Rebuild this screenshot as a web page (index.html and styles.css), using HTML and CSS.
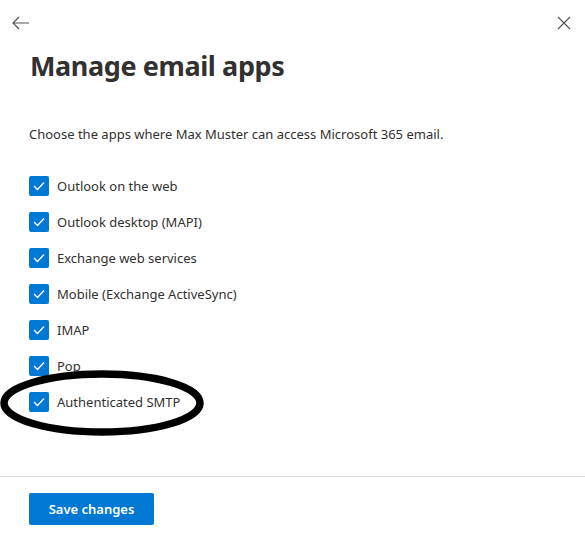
FILE: index.html
```html
<!DOCTYPE html>
<html>
<head>
<meta charset="utf-8">
<link rel="stylesheet" href="styles.css">
</head>
<body>
<div class="panel">
  <div class="topbar">
    <svg class="icon back" width="18" height="14" viewBox="0 0 18 14"><path d="M7 1 L1 7 L7 13 M1 7 H17" fill="none" stroke="#555" stroke-width="1.2"/></svg>
    <svg class="icon close" width="14" height="14" viewBox="0 0 14 14"><path d="M1 1 L13 13 M13 1 L1 13" fill="none" stroke="#555" stroke-width="1.2"/></svg>
  </div>
  <h1 class="title">Manage email apps</h1>
  <p class="desc">Choose the apps where Max Muster can access Microsoft 365 email.</p>
  <ul class="list">
    <li class="item"><span class="cb"><svg width="12" height="10" viewBox="0 0 12 10"><path d="M1 5 L4.5 8.5 L11 1.5" fill="none" stroke="#fff" stroke-width="1.3"/></svg></span>Outlook on the web</li>
    <li class="item"><span class="cb"><svg width="12" height="10" viewBox="0 0 12 10"><path d="M1 5 L4.5 8.5 L11 1.5" fill="none" stroke="#fff" stroke-width="1.3"/></svg></span>Outlook desktop (MAPI)</li>
    <li class="item"><span class="cb"><svg width="12" height="10" viewBox="0 0 12 10"><path d="M1 5 L4.5 8.5 L11 1.5" fill="none" stroke="#fff" stroke-width="1.3"/></svg></span>Exchange web services</li>
    <li class="item"><span class="cb"><svg width="12" height="10" viewBox="0 0 12 10"><path d="M1 5 L4.5 8.5 L11 1.5" fill="none" stroke="#fff" stroke-width="1.3"/></svg></span>Mobile (Exchange ActiveSync)</li>
    <li class="item"><span class="cb"><svg width="12" height="10" viewBox="0 0 12 10"><path d="M1 5 L4.5 8.5 L11 1.5" fill="none" stroke="#fff" stroke-width="1.3"/></svg></span>IMAP</li>
    <li class="item"><span class="cb"><svg width="12" height="10" viewBox="0 0 12 10"><path d="M1 5 L4.5 8.5 L11 1.5" fill="none" stroke="#fff" stroke-width="1.3"/></svg></span>Pop</li>
    <li class="item highlight"><span class="cb"><svg width="12" height="10" viewBox="0 0 12 10"><path d="M1 5 L4.5 8.5 L11 1.5" fill="none" stroke="#fff" stroke-width="1.3"/></svg></span>Authenticated SMTP
      <svg class="ring" width="210" height="72" viewBox="0 0 210 72"><ellipse cx="102" cy="35" rx="98" ry="29" fill="none" stroke="#000" stroke-width="7.5"/></svg>
    </li>
  </ul>
  <div class="footer">
    <button class="save">Save changes</button>
  </div>
</div>
</body>
</html>
```
FILE: styles.css
```css
html, body { margin: 0; padding: 0; background: #fff; }
body { font-family: "Noto Sans", "Open Sans", sans-serif; color: #323130; width: 585px; height: 539px; overflow: hidden; }
.panel { display: flex; flex-direction: column; height: 539px; }
.topbar { display: flex; justify-content: space-between; align-items: center; padding: 15px 14px 0 12px; height: 16px; }
.icon { display: block; }
.title { margin: 17px 0 0 30px; font-size: 27px; font-weight: 700; line-height: 36px; color: #323130; letter-spacing: -0.4px; }
.desc { margin: 41px 0 0 29px; font-size: 13px; line-height: 18px; }
.list { list-style: none; margin: 33px 0 0 0; padding: 0 0 0 29px; display: flex; flex-direction: column; gap: 16px; }
.item { display: flex; align-items: center; gap: 8px; font-size: 13px; line-height: 20px; height: 20px; position: relative; }
.cb { width: 20px; height: 20px; background: #0078d4; border-radius: 2px; display: flex; align-items: center; justify-content: center; flex: none; }
.ring { position: absolute; left: -29px; top: -24px; }
.footer { margin-top: auto; border-top: 1px solid #e1dfdd; padding: 16px 0 14px 29px; height: 32px; }
.save { background: #0078d4; color: #fff; border: none; border-radius: 2px; font-family: inherit; font-size: 13px; font-weight: 600; height: 32px; width: 125px; padding: 0; }
```
